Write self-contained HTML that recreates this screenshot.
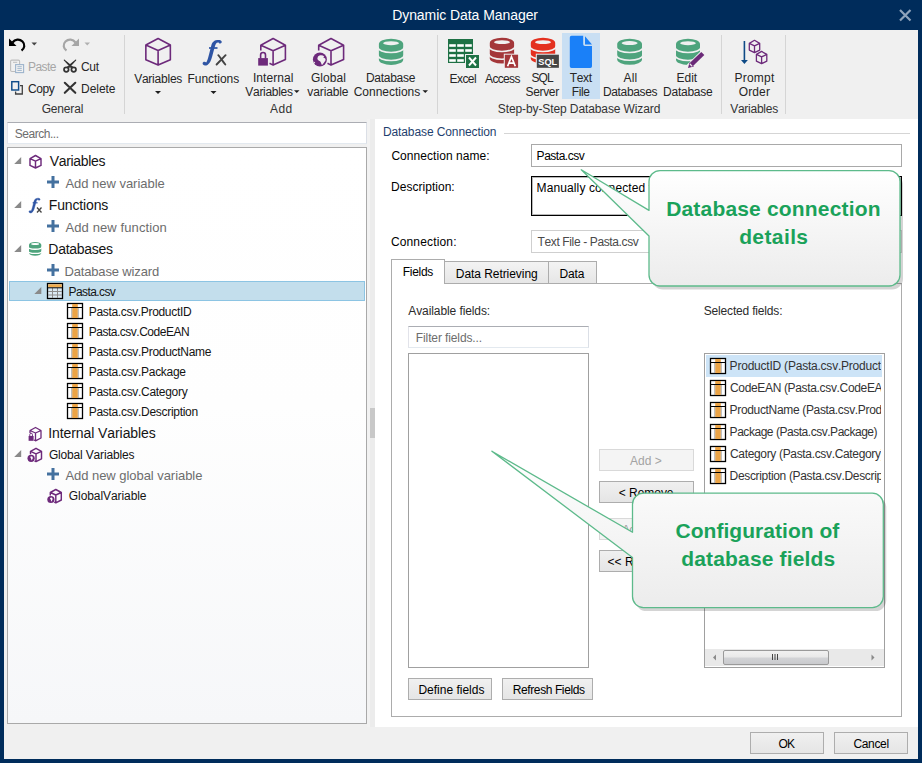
<!DOCTYPE html><html><head><meta charset="utf-8"><style>
html,body{margin:0;padding:0}
body{width:922px;height:763px;position:relative;overflow:hidden;background:#002c5b;font-family:"Liberation Sans",sans-serif;font-kerning:none}
.t{position:absolute;white-space:nowrap;line-height:1}
.r{position:absolute;box-sizing:border-box}
svg{position:absolute;left:0;top:0;overflow:visible}
</style></head><body>
<div class="r" style="left:4px;top:30px;width:914px;height:729px;background:#f0f0f0"></div>
<div class="r" style="left:562px;top:33px;width:38px;height:66px;background:#c9dff3"></div>
<div class="t" style="left:392.15px;top:8.14px;font-size:14px;color:#ffffff;letter-spacing:-0.062px;">Dynamic Data Manager</div>
<div class="r" style="left:124px;top:35px;width:1px;height:79px;background:#d5d5d5"></div>
<div class="r" style="left:437px;top:35px;width:1px;height:79px;background:#d5d5d5"></div>
<div class="r" style="left:721px;top:35px;width:1px;height:79px;background:#d5d5d5"></div>
<div class="r" style="left:785px;top:35px;width:1px;height:79px;background:#d5d5d5"></div>
<div class="t" style="left:41.70px;top:102.84px;font-size:12.0px;color:#333333;letter-spacing:-0.181px;">General</div>
<div class="t" style="left:269.98px;top:102.84px;font-size:12.0px;color:#333333;letter-spacing:0.473px;">Add</div>
<div class="t" style="left:497.86px;top:102.84px;font-size:12.0px;color:#333333;letter-spacing:-0.107px;">Step-by-Step Database Wizard</div>
<div class="t" style="left:730.15px;top:102.84px;font-size:12.0px;color:#333333;letter-spacing:-0.243px;">Variables</div>
<div class="t" style="left:28.02px;top:60.84px;font-size:12.0px;color:#a6a6a6;letter-spacing:-0.542px;">Paste</div>
<div class="t" style="left:80.89px;top:60.84px;font-size:12.0px;color:#262626;letter-spacing:-0.238px;">Cut</div>
<div class="t" style="left:27.89px;top:82.84px;font-size:12.0px;color:#262626;letter-spacing:-0.360px;">Copy</div>
<div class="t" style="left:81.02px;top:82.84px;font-size:12.0px;color:#262626;letter-spacing:-0.034px;">Delete</div>
<div class="t" style="left:134.15px;top:72.84px;font-size:12.0px;color:#262626;letter-spacing:-0.230px;">Variables</div>
<div class="t" style="left:187.52px;top:72.84px;font-size:12.0px;color:#262626;letter-spacing:-0.038px;">Functions</div>
<div class="t" style="left:252.99px;top:71.84px;font-size:12.0px;color:#262626;letter-spacing:0.041px;">Internal</div>
<div class="t" style="left:245.35px;top:85.84px;font-size:12.0px;color:#262626;letter-spacing:-0.305px;">Variables</div>
<div class="t" style="left:311.00px;top:71.84px;font-size:12.0px;color:#262626;letter-spacing:0.024px;">Global</div>
<div class="t" style="left:307.36px;top:85.84px;font-size:12.0px;color:#262626;letter-spacing:-0.121px;">variable</div>
<div class="t" style="left:365.92px;top:71.84px;font-size:12.0px;color:#262626;letter-spacing:-0.265px;">Database</div>
<div class="t" style="left:353.69px;top:85.84px;font-size:12.0px;color:#262626;letter-spacing:-0.017px;">Connections</div>
<div class="t" style="left:449.62px;top:72.84px;font-size:12.0px;color:#262626;letter-spacing:-0.589px;">Excel</div>
<div class="t" style="left:485.08px;top:72.84px;font-size:12.0px;color:#262626;letter-spacing:-0.664px;">Access</div>
<div class="t" style="left:531.46px;top:71.84px;font-size:12.0px;color:#262626;letter-spacing:-0.884px;">SQL</div>
<div class="t" style="left:525.46px;top:85.84px;font-size:12.0px;color:#262626;letter-spacing:-0.320px;">Server</div>
<div class="t" style="left:569.63px;top:71.84px;font-size:12.0px;color:#262626;letter-spacing:-0.327px;">Text</div>
<div class="t" style="left:571.82px;top:85.84px;font-size:12.0px;color:#262626;letter-spacing:-0.406px;">File</div>
<div class="t" style="left:623.58px;top:71.84px;font-size:12.0px;color:#262626;letter-spacing:0.145px;">All</div>
<div class="t" style="left:603.02px;top:85.84px;font-size:12.0px;color:#262626;letter-spacing:-0.369px;">Databases</div>
<div class="t" style="left:676.62px;top:71.84px;font-size:12.0px;color:#262626;letter-spacing:-0.068px;">Edit</div>
<div class="t" style="left:663.02px;top:85.84px;font-size:12.0px;color:#262626;letter-spacing:-0.236px;">Database</div>
<div class="t" style="left:734.52px;top:71.84px;font-size:12.0px;color:#262626;letter-spacing:0.219px;">Prompt</div>
<div class="t" style="left:738.73px;top:85.84px;font-size:12.0px;color:#262626;letter-spacing:0.123px;">Order</div>
<div class="r" style="left:7px;top:122px;width:360px;height:22px;background:#fff;border:1px solid #dfe3e8;border-top-color:#abadb3;border-left-color:#e2e3ea;border-right-color:#dbdfe6;border-bottom-color:#e3e9ef"></div>
<div class="t" style="left:14.76px;top:127.84px;font-size:12px;color:#6d6d6d;letter-spacing:-0.473px;">Search...</div>
<div class="r" style="left:7px;top:147px;width:360px;height:577px;background:linear-gradient(#ffffff 0%,#fefefe 45%,#f6f7f9 100%);border:1px solid #a9a9a9"></div>
<div class="r" style="left:367px;top:119px;width:8px;height:608px;background:#f2f2f2"></div>
<div class="r" style="left:370px;top:119px;width:5px;height:608px;background:#ececec"></div>
<div class="r" style="left:370px;top:408px;width:5px;height:30px;background:#c8c8c8"></div>
<div class="r" style="left:9px;top:281px;width:356px;height:20px;background:#c3deec;border:1px solid #8cc4e3"></div>
<div class="t" style="left:49.84px;top:154.14px;font-size:14px;color:#141414;letter-spacing:-0.350px;">Variables</div>
<div class="t" style="left:65.47px;top:176.99px;font-size:13px;color:#6d6d6d;letter-spacing:-0.028px;">Add new variable</div>
<div class="t" style="left:48.75px;top:198.14px;font-size:14px;color:#141414;letter-spacing:-0.143px;">Functions</div>
<div class="t" style="left:65.47px;top:220.99px;font-size:13px;color:#6d6d6d;letter-spacing:0.109px;">Add new function</div>
<div class="t" style="left:48.35px;top:242.14px;font-size:14px;color:#141414;letter-spacing:-0.285px;">Databases</div>
<div class="t" style="left:64.43px;top:264.99px;font-size:13px;color:#6d6d6d;letter-spacing:-0.152px;">Database wizard</div>
<div class="t" style="left:68.62px;top:285.84px;font-size:12px;color:#141414;letter-spacing:-0.599px;">Pasta.csv</div>
<div class="t" style="left:88.72px;top:305.84px;font-size:12px;color:#141414;letter-spacing:-0.325px;">Pasta.csv.ProductID</div>
<div class="t" style="left:88.72px;top:325.84px;font-size:12px;color:#141414;letter-spacing:-0.491px;">Pasta.csv.CodeEAN</div>
<div class="t" style="left:88.72px;top:345.84px;font-size:12px;color:#141414;letter-spacing:-0.3px">Pasta.csv.ProductName</div>
<div class="t" style="left:88.72px;top:365.84px;font-size:12px;color:#141414;letter-spacing:-0.3px">Pasta.csv.Package</div>
<div class="t" style="left:88.72px;top:385.84px;font-size:12px;color:#141414;letter-spacing:-0.3px">Pasta.csv.Category</div>
<div class="t" style="left:88.72px;top:405.84px;font-size:12px;color:#141414;letter-spacing:-0.3px">Pasta.csv.Description</div>
<div class="t" style="left:48.21px;top:426.14px;font-size:14px;color:#141414;letter-spacing:-0.080px;">Internal Variables</div>
<div class="t" style="left:48.90px;top:448.84px;font-size:12px;color:#141414;letter-spacing:-0.167px;">Global Variables</div>
<div class="t" style="left:65.47px;top:468.99px;font-size:13px;color:#6d6d6d;letter-spacing:-0.05px">Add new global variable</div>
<div class="t" style="left:68.80px;top:490.34px;font-size:12px;color:#141414;letter-spacing:-0.075px;">GlobalVariable</div>
<div class="r" style="left:375px;top:119px;width:543px;height:608px;background:#fff"></div>
<div class="t" style="left:382.92px;top:125.84px;font-size:12px;color:#1f3f6e;letter-spacing:-0.103px;">Database Connection</div>
<div class="r" style="left:504px;top:133px;width:406px;height:1px;background:#d5d5d5"></div>
<div class="t" style="left:391.39px;top:149.84px;font-size:12px;color:#000;letter-spacing:0.061px;">Connection name:</div>
<div class="r" style="left:531px;top:144px;width:371px;height:23px;border:1px solid #a9a9a9;background:#fff"></div>
<div class="t" style="left:536.62px;top:149.84px;font-size:12px;color:#000;letter-spacing:-0.487px;">Pasta.csv</div>
<div class="t" style="left:391.02px;top:180.84px;font-size:12px;color:#000;letter-spacing:0.029px;">Description:</div>
<div class="r" style="left:531px;top:176px;width:371px;height:40px;border:1px solid #000;box-shadow:inset 0 0 0 1px rgba(0,0,0,0.28);background:#fff"></div>
<div class="t" style="left:536.62px;top:181.84px;font-size:12px;color:#000;letter-spacing:0.107px">Manually connected to text file</div>
<div class="t" style="left:390.89px;top:235.84px;font-size:12px;color:#000;letter-spacing:0.156px;">Connection:</div>
<div class="r" style="left:531px;top:230px;width:371px;height:23px;border:1px solid #cfcfcf;background:#fff"></div>
<div class="t" style="left:537.53px;top:235.84px;font-size:12px;color:#4a4a4a;letter-spacing:-0.369px;">Text File - Pasta.csv</div>
<div class="r" style="left:391px;top:283px;width:511px;height:434px;border:1px solid #acacac"></div>
<div class="r" style="left:444px;top:261px;width:105px;height:23px;background:linear-gradient(#f3f3f3,#e6e6e6);border:1px solid #acacac"></div>
<div class="r" style="left:548px;top:261px;width:49px;height:23px;background:linear-gradient(#f3f3f3,#e6e6e6);border:1px solid #acacac"></div>
<div class="r" style="left:391px;top:259px;width:54px;height:25px;background:#fff;border:1px solid #acacac;border-bottom:none"></div>
<div class="t" style="left:402.82px;top:265.84px;font-size:12px;color:#000;letter-spacing:-0.298px;">Fields</div>
<div class="t" style="left:455.82px;top:267.84px;font-size:12px;color:#000;letter-spacing:-0.061px;">Data Retrieving</div>
<div class="t" style="left:559.42px;top:267.84px;font-size:12px;color:#000;letter-spacing:-0.121px;">Data</div>
<div class="t" style="left:408.28px;top:304.84px;font-size:12px;color:#2b2b2b;letter-spacing:-0.091px;">Available fields:</div>
<div class="t" style="left:703.76px;top:304.84px;font-size:12px;color:#2b2b2b;letter-spacing:-0.176px;">Selected fields:</div>
<div class="r" style="left:408px;top:326px;width:181px;height:22px;background:#fff;border:1px solid #dfe3e8;border-top-color:#abadb3;border-left-color:#e2e3ea;border-right-color:#dbdfe6;border-bottom-color:#e3e9ef"></div>
<div class="t" style="left:415.82px;top:331.84px;font-size:12px;color:#6d6d6d;letter-spacing:-0.116px;">Filter fields...</div>
<div class="r" style="left:408px;top:353px;width:181px;height:315px;border:1px solid #a0a0a0;background:#fff"></div>
<div class="r" style="left:599px;top:449px;width:95px;height:22px;border:1px solid #d9d9d9;background:#f4f4f4"></div>
<div class="t" style="left:629.98px;top:454.84px;font-size:12px;color:#a3a3a3;letter-spacing:0.029px;">Add &gt;</div>
<div class="r" style="left:599px;top:481px;width:95px;height:22px;border:1px solid #adadad;background:linear-gradient(#f0f0f0,#e5e5e5)"></div>
<div class="t" style="left:618.81px;top:486.84px;font-size:12px;color:#000;letter-spacing:-0.043px;">&lt; Remove</div>
<div class="r" style="left:599px;top:518px;width:95px;height:22px;border:1px solid #d9d9d9;background:#f4f4f4"></div>
<div class="t" style="left:621.98px;top:523.84px;font-size:12px;color:#a3a3a3;letter-spacing:-0.604px;">Add all &gt;&gt;</div>
<div class="r" style="left:599px;top:550px;width:95px;height:22px;border:1px solid #adadad;background:linear-gradient(#f0f0f0,#e5e5e5)"></div>
<div class="t" style="left:607.41px;top:555.84px;font-size:12px;color:#000;letter-spacing:0.085px;">&lt;&lt; Remove all</div>
<div class="r" style="left:408px;top:678px;width:84px;height:22px;border:1px solid #adadad;background:linear-gradient(#f0f0f0,#e5e5e5)"></div>
<div class="t" style="left:418.42px;top:683.84px;font-size:12px;color:#000;">Define fields</div>
<div class="r" style="left:502px;top:678px;width:91px;height:22px;border:1px solid #adadad;background:linear-gradient(#f0f0f0,#e5e5e5)"></div>
<div class="t" style="left:512.82px;top:683.84px;font-size:12px;color:#000;letter-spacing:-0.403px;">Refresh Fields</div>
<div class="r" style="left:704px;top:353px;width:181px;height:315px;border:1px solid #a0a0a0;background:#fff"></div>
<div class="r" style="left:706px;top:355px;width:176px;height:22px;background:#cde4f7"></div>
<div class="r" style="left:706px;top:357px;width:175.3px;height:18px;overflow:hidden"><div class="t" style="left:23.62px;top:2.84px;font-size:12px;color:#333333;letter-spacing:-0.219px">ProductID (Pasta.csv.ProductID)</div>
</div><div class="r" style="left:706px;top:379px;width:175.3px;height:18px;overflow:hidden"><div class="t" style="left:23.99px;top:2.84px;font-size:12px;color:#333333;letter-spacing:-0.34px">CodeEAN (Pasta.csv.CodeEAN)</div>
</div><div class="r" style="left:706px;top:401px;width:175.3px;height:18px;overflow:hidden"><div class="t" style="left:23.62px;top:2.84px;font-size:12px;color:#333333;letter-spacing:-0.34px">ProductName (Pasta.csv.ProductName)</div>
</div><div class="r" style="left:706px;top:423px;width:175.3px;height:18px;overflow:hidden"><div class="t" style="left:23.62px;top:2.84px;font-size:12px;color:#333333;letter-spacing:-0.467px">Package (Pasta.csv.Package)</div>
</div><div class="r" style="left:706px;top:445px;width:175.3px;height:18px;overflow:hidden"><div class="t" style="left:23.99px;top:2.84px;font-size:12px;color:#333333;letter-spacing:-0.335px">Category (Pasta.csv.Category)</div>
</div><div class="r" style="left:706px;top:467px;width:175.3px;height:18px;overflow:hidden"><div class="t" style="left:23.62px;top:2.84px;font-size:12px;color:#333333;letter-spacing:-0.34px">Description (Pasta.csv.Description)</div>
</div><div class="r" style="left:705px;top:649px;width:179px;height:17px;background:#e9e9e9"></div>
<div class="r" style="left:723px;top:650px;width:106px;height:15px;border:1px solid #9a9a9a;border-radius:2px;background:linear-gradient(#f1f1f1 0%,#e9e9e9 45%,#d2d3d6 55%,#c9cacd 100%)"></div>
<div class="r" style="left:750px;top:732px;width:74px;height:22px;border:1px solid #adadad;background:linear-gradient(#f0f0f0,#e5e5e5)"></div>
<div class="t" style="left:778.43px;top:737.84px;font-size:12px;color:#000;letter-spacing:-0.835px;">OK</div>
<div class="r" style="left:834px;top:732px;width:74px;height:22px;border:1px solid #adadad;background:linear-gradient(#f0f0f0,#e5e5e5)"></div>
<div class="t" style="left:853.39px;top:737.84px;font-size:12px;color:#000;letter-spacing:-0.328px;">Cancel</div>
<svg width="922" height="763" viewBox="0 0 922 763">
<path d="M900,10 L910.5,20.5 M910.5,10 L900,20.5" stroke="#8fa3bb" stroke-width="2.2"/>
<path d="M12.5,42.5 C15,39 19.5,38.5 22.5,41.5 C25.5,44.5 24.5,48.5 21.5,50.5" fill="none" stroke="#000" stroke-width="2.2"/>
<path d="M9,38.5 V46 H16.5 Z" fill="#000"/>
<path d="M31.5,42.5 H37 L34.25,45.5 Z" fill="#444"/>
<path d="M75.5,42.5 C73,39 68.5,38.5 65.5,41.5 C62.5,44.5 63.5,48.5 66.5,50.5" fill="none" stroke="#a6a6a6" stroke-width="2.2"/>
<path d="M79,38.5 V46 H71.5 Z" fill="#a6a6a6"/>
<path d="M84.5,42.5 H90 L87.25,45.5 Z" fill="#b0b0b0"/>
<rect x="10.6" y="60.1" width="9" height="11.4" rx="1.2" fill="none" stroke="#bdbdbd" stroke-width="1.1"/><path d="M13,62.3 H17.2" stroke="#bdbdbd" stroke-width="1"/>
<rect x="15.6" y="64.6" width="8" height="8" fill="#f0f0f0" stroke="#9db4cc" stroke-width="1.1"/>
<path d="M17.4,66.7 H21.8 M17.4,68.6 H21.8 M17.4,70.5 H21.8" stroke="#9db4cc" stroke-width="0.9"/>
<circle cx="66.3" cy="69.6" r="2.3" fill="none" stroke="#333" stroke-width="1.7"/><circle cx="73.7" cy="69.6" r="2.3" fill="none" stroke="#333" stroke-width="1.7"/>
<path d="M64.3,60.2 L71,67.5 L72.3,66.6 Z M75.7,60.2 L69,67.5 L67.7,66.6 Z" fill="#333" stroke="#333" stroke-width="1.1" stroke-linejoin="round"/>
<rect x="11.8" y="81.7" width="6.8" height="8.3" fill="none" stroke="#0f4c8a" stroke-width="1.45"/>
<path d="M20,85.6 H22.3 V94 H15.6 V91.6" fill="none" stroke="#404040" stroke-width="1.3"/>
<path d="M64.8,82.8 L75.3,92.8 M75.3,82.8 L64.8,92.8" stroke="#333" stroke-width="2.1" stroke-linecap="round"/>
<path d="M158.1,38.5 L170.35,45.017 L158.1,50.47 L145.85,45.017 Z M158.1,50.47 V65.1 M145.85,45.017 V59.647000000000006 L158.1,65.1 L170.35,59.647000000000006 V45.017" fill="none" stroke="#6d2a7b" stroke-width="1.6" stroke-linejoin="round" />
<path d="M155,91 H161 L158,94 Z" fill="#1e1e1e"/>
<path d="M202.6,63.3 C202.6,61.6 205.2,61.2 206.2,62.6 C207.2,61 208,58.5 209,54.5 L211.3,45.5 C212.6,40.8 215.5,39.8 219.5,40.1 C222.2,40.4 222.6,43.3 220.3,43.6 C219.3,43.7 218.8,43 218.6,42.5 C216.3,42.2 215.5,44 214.7,47 L212.3,56 C210.8,62 208.5,65.7 205,65.6 C203.6,65.5 202.6,64.6 202.6,63.3 Z" fill="#2f55a4"/>
<path d="M209,48 H217.5" stroke="#2f55a4" stroke-width="1.7"/>
<path d="M218.3,55.2 C220,57 222.5,61 225.3,64.5 M225.6,55.2 L216.6,64.5" stroke="#444" stroke-width="1.9" stroke-linecap="round"/>
<path d="M210.5,91 H216.5 L213.5,94 Z" fill="#1e1e1e"/>
<path d="M273.1,38.5 L285.4,45.3 L273.1,50.75 L260.8,45.3 Z M273.1,50.75 V65.1 M260.8,45.3 V50.5 M269.5,63.3 L273.1,65.1 L285.4,59.5 V45.3" fill="none" stroke="#6d2a7b" stroke-width="1.6" stroke-linejoin="round"/>
<rect x="258.2" y="58.1" width="9.7" height="7.5" fill="#6d2a7b"/><path d="M260.6,58.5 V55 A2.45,2.45 0 0 1 265.5,55 V58.5" fill="none" stroke="#6d2a7b" stroke-width="1.6"/>
<path d="M294,90.2 H299.5 L296.75,93 Z" fill="#1e1e1e"/>
<path d="M331,38.5 L343.6,45.3 L331,50.75 L318.7,45.3 Z M331,50.75 V65.1 M318.7,45.3 V50.5 M327.5,63.3 L331,65.1 L343.6,59.5 V45.3" fill="none" stroke="#6d2a7b" stroke-width="1.6" stroke-linejoin="round"/>
<circle cx="319.9" cy="59.5" r="7" fill="#6d2a7b"/><path d="M318,56.6 C319.5,55 322.5,54.8 324.2,56.4 L323.2,57.6 C325.2,57.8 326.2,59.5 325.2,61 C324.2,62.5 322.8,64 322,65.2 C321.2,63.5 321,62.2 320,61.2 C318.6,60.6 317.2,59.5 317.4,58.2 Z M313.4,61.6 L315.2,62.2 L314.6,63.6 Z" fill="#f0f0f0"/>
<path d="M378.9,43.940000000000005 A12.150000000000006,5.240000000000001 0 0 1 403.2,43.940000000000005 V59.660000000000004 A12.150000000000006,5.240000000000001 0 0 1 378.9,59.660000000000004 Z" fill="#4ea47d"/><ellipse cx="391.04999999999995" cy="43.14000000000001" rx="7.897500000000004" ry="1.9912000000000005" fill="#f0f0f0"/><path d="M377.9,47.346000000000004 A13.150000000000006,5.240000000000001 0 0 0 404.2,47.346000000000004" fill="none" stroke="#f0f0f0" stroke-width="1.57"/><path d="M377.9,55.206 A13.150000000000006,5.240000000000001 0 0 0 404.2,55.206" fill="none" stroke="#f0f0f0" stroke-width="1.57"/>
<path d="M422.5,90.2 H428 L425.25,93 Z" fill="#1e1e1e"/>
<rect x="448" y="39" width="25" height="24" fill="#1e7145"/>
<rect x="449.2" y="44.2" width="6.6" height="2.6" fill="#fff"/>
<rect x="449.2" y="49.2" width="6.6" height="2.6" fill="#fff"/>
<rect x="449.2" y="54.2" width="6.6" height="2.6" fill="#fff"/>
<rect x="449.2" y="59.2" width="6.6" height="2.6" fill="#fff"/>
<rect x="457.2" y="44.2" width="6.6" height="2.6" fill="#fff"/>
<rect x="457.2" y="49.2" width="6.6" height="2.6" fill="#fff"/>
<rect x="457.2" y="54.2" width="6.6" height="2.6" fill="#fff"/>
<rect x="457.2" y="59.2" width="6.6" height="2.6" fill="#fff"/>
<rect x="465.2" y="44.2" width="6.6" height="2.6" fill="#fff"/>
<rect x="465.2" y="49.2" width="6.6" height="2.6" fill="#fff"/>
<rect x="465" y="54" width="15" height="15" fill="#f0f0f0"/><rect x="466" y="55" width="13" height="13" fill="#1e7145"/>
<path d="M469,57.5 L476,65.5 M476,57.5 L469,65.5" stroke="#fff" stroke-width="1.9"/>
<path d="M489.8,42.96 A12.150000000000006,5.160000000000001 0 0 1 514.1,42.96 V58.44 A12.150000000000006,5.160000000000001 0 0 1 489.8,58.44 Z" fill="#a4373a"/><ellipse cx="501.95000000000005" cy="42.160000000000004" rx="7.897500000000004" ry="1.9608000000000003" fill="#f0f0f0"/><path d="M488.8,46.314 A13.150000000000006,5.160000000000001 0 0 0 515.1,46.314" fill="none" stroke="#f0f0f0" stroke-width="1.55"/><path d="M488.8,54.054 A13.150000000000006,5.160000000000001 0 0 0 515.1,54.054" fill="none" stroke="#f0f0f0" stroke-width="1.55"/>
<rect x="503.8" y="53.7" width="15.3" height="15.1" fill="#f0f0f0"/><rect x="504.8" y="54.7" width="13.3" height="13.1" fill="#a4373a"/>
<path d="M507.6,66.2 L511.45,56.8 L515.3,66.2 M508.9,63.2 H514" fill="none" stroke="#fff" stroke-width="1.7"/>
<path d="M530.8,42.96 A12.200000000000045,5.160000000000001 0 0 1 555.2,42.96 V58.44 A12.200000000000045,5.160000000000001 0 0 1 530.8,58.44 Z" fill="#e4301f"/><ellipse cx="543.0" cy="42.160000000000004" rx="7.93000000000003" ry="1.9608000000000003" fill="#f0f0f0"/><path d="M529.8,46.314 A13.200000000000045,5.160000000000001 0 0 0 556.2,46.314" fill="none" stroke="#f0f0f0" stroke-width="1.55"/><path d="M529.8,54.054 A13.200000000000045,5.160000000000001 0 0 0 556.2,54.054" fill="none" stroke="#f0f0f0" stroke-width="1.55"/>
<rect x="535.8" y="53.7" width="24.1" height="15.1" fill="#f0f0f0"/><rect x="536.8" y="54.7" width="22.1" height="13.1" fill="#454545"/>
<text x="547.8" y="65.3" font-family="Liberation Sans" font-weight="bold" font-size="9.2" fill="#fff" text-anchor="middle">SQL</text>
<path d="M571.5,35.8 H583.2 V44.2 A1.8,1.8 0 0 0 585,46 H592 V66.3 A1.7,1.7 0 0 1 590.3,68 H571.5 A1.7,1.7 0 0 1 569.8,66.3 V37.5 A1.7,1.7 0 0 1 571.5,35.8 Z" fill="#1a80f8"/>
<path d="M585,36.3 L592,44.4 H585 Z" fill="#1a80f8"/>
<path d="M617.2,43.900000000000006 A12.399999999999977,5.2 0 0 1 642,43.900000000000006 V59.5 A12.399999999999977,5.2 0 0 1 617.2,59.5 Z" fill="#4ea47d"/><ellipse cx="629.6" cy="43.10000000000001" rx="8.059999999999986" ry="1.9760000000000002" fill="#f0f0f0"/><path d="M616.2,47.28 A13.399999999999977,5.2 0 0 0 643,47.28" fill="none" stroke="#f0f0f0" stroke-width="1.56"/><path d="M616.2,55.08 A13.399999999999977,5.2 0 0 0 643,55.08" fill="none" stroke="#f0f0f0" stroke-width="1.56"/>
<path d="M676,43.940000000000005 A12.0,5.240000000000001 0 0 1 700,43.940000000000005 V59.660000000000004 A12.0,5.240000000000001 0 0 1 676,59.660000000000004 Z" fill="#4ea47d"/><ellipse cx="688.0" cy="43.14000000000001" rx="7.800000000000001" ry="1.9912000000000005" fill="#f0f0f0"/><path d="M675,47.346000000000004 A13.0,5.240000000000001 0 0 0 701,47.346000000000004" fill="none" stroke="#f0f0f0" stroke-width="1.57"/><path d="M675,55.206 A13.0,5.240000000000001 0 0 0 701,55.206" fill="none" stroke="#f0f0f0" stroke-width="1.57"/>
<path d="M687.5,70 L704,53.8" stroke="#f0f0f0" stroke-width="8.3"/>
<path d="M691.5,64.3 L702.8,53.5" stroke="#6b2a78" stroke-width="4.4" stroke-linecap="butt"/>
<path d="M688,68 L689.6,62.2 L694,66.5 Z" fill="#6b2a78"/><path d="M689.9,64 L692.2,66.3" stroke="#f0f0f0" stroke-width="1.1"/>
<path d="M744.4,41 V61" stroke="#0e4a86" stroke-width="1.6"/><path d="M741,60 H747.9 L744.4,64 Z" fill="#0e4a86"/>
<path d="M754.5,40.3 L759.7,43.3135 L754.5,45.834999999999994 L749.3,43.3135 Z M754.5,45.834999999999994 V52.599999999999994 M749.3,43.3135 V50.0785 L754.5,52.599999999999994 L759.7,50.0785 V43.3135" fill="none" stroke="#6d2a7b" stroke-width="1.3" stroke-linejoin="round" />
<path d="M761.6,51.4 L766.8000000000001,54.4135 L761.6,56.935 L756.4,54.4135 Z M761.6,56.935 V63.7 M756.4,54.4135 V61.1785 L761.6,63.7 L766.8000000000001,61.1785 V54.4135" fill="none" stroke="#6d2a7b" stroke-width="1.3" stroke-linejoin="round" />
</svg><svg width="922" height="763" viewBox="0 0 922 763">
<path d="M14.2,164 H21.2 V157 Z" fill="#8a8a8a"/>
<path d="M14.2,208 H21.2 V201 Z" fill="#8a8a8a"/>
<path d="M14.2,252 H21.2 V245 Z" fill="#8a8a8a"/>
<path d="M34.3,294 H41.3 V287 Z" fill="#8a8a8a"/>
<path d="M14.2,457 H21.2 V450 Z" fill="#8a8a8a"/>
<path d="M35.5,155.5 L41.0,158.5625 L35.5,161.125 L30.0,158.5625 Z M35.5,161.125 V168.0 M30.0,158.5625 V165.4375 L35.5,168.0 L41.0,165.4375 V158.5625" fill="none" stroke="#6d2a7b" stroke-width="1.45" stroke-linejoin="round" />
<g transform="translate(-87.5,175.2) scale(0.575)"><path d="M202.6,63.3 C202.6,61.6 205.2,61.2 206.2,62.6 C207.2,61 208,58.5 209,54.5 L211.3,45.5 C212.6,40.8 215.5,39.8 219.5,40.1 C222.2,40.4 222.6,43.3 220.3,43.6 C219.3,43.7 218.8,43 218.6,42.5 C216.3,42.2 215.5,44 214.7,47 L212.3,56 C210.8,62 208.5,65.7 205,65.6 C203.6,65.5 202.6,64.6 202.6,63.3 Z" fill="#2f55a4" stroke="#2f55a4" stroke-width="0.8"/><path d="M209,48 H217.5" stroke="#2f55a4" stroke-width="2"/></g>
<path d="M37,207.5 L41.5,212.5 M41.5,207.5 L37,212.5" stroke="#444" stroke-width="1.3"/>
<path d="M29,244.74 A6.149999999999999,2.739999999999998 0 0 1 41.3,244.74 V252.95999999999998 A6.149999999999999,2.739999999999998 0 0 1 29,252.95999999999998 Z" fill="#4ea47d"/><ellipse cx="35.15" cy="243.94" rx="3.997499999999999" ry="1.0411999999999992" fill="#ffffff"/><path d="M28,246.521 A7.149999999999999,2.739999999999998 0 0 0 42.3,246.521" fill="none" stroke="#ffffff" stroke-width="1.40"/><path d="M28,250.631 A7.149999999999999,2.739999999999998 0 0 0 42.3,250.631" fill="none" stroke="#ffffff" stroke-width="1.40"/>
<path d="M47,182 H59 M53,176 V188" stroke="#44719f" stroke-width="3"/>
<path d="M47,226 H59 M53,220 V232" stroke="#44719f" stroke-width="3"/>
<path d="M47,270 H59 M53,264 V276" stroke="#44719f" stroke-width="3"/>
<path d="M47,474 H59 M53,468 V480" stroke="#44719f" stroke-width="3"/>
<rect x="47.5" y="283.5" width="15" height="15" fill="#dbeaf4" stroke="#000" stroke-width="1.3"/>
<rect x="48.3" y="284.3" width="13.4" height="3" fill="#f0ad4e"/>
<path d="M48,291.5 H62 M48,295 H62 M52.5,288 V298 M57.5,288 V298" stroke="#8d8d8d" stroke-width="1"/>
<path d="M48,287.8 H62" stroke="#000" stroke-width="1"/>
<rect x="67.5" y="303.5" width="15" height="15" fill="#fff" stroke="#000" stroke-width="1.3"/><rect x="72.2" y="304" width="5.6" height="14" fill="#eba447"/><path d="M71.7,308 V318 M78.3,308 V318" stroke="#9a9a9a" stroke-width="0.8"/><path d="M68,307.5 H82" stroke="#000" stroke-width="1"/>
<rect x="67.5" y="323.5" width="15" height="15" fill="#fff" stroke="#000" stroke-width="1.3"/><rect x="72.2" y="324" width="5.6" height="14" fill="#eba447"/><path d="M71.7,328 V338 M78.3,328 V338" stroke="#9a9a9a" stroke-width="0.8"/><path d="M68,327.5 H82" stroke="#000" stroke-width="1"/>
<rect x="67.5" y="343.5" width="15" height="15" fill="#fff" stroke="#000" stroke-width="1.3"/><rect x="72.2" y="344" width="5.6" height="14" fill="#eba447"/><path d="M71.7,348 V358 M78.3,348 V358" stroke="#9a9a9a" stroke-width="0.8"/><path d="M68,347.5 H82" stroke="#000" stroke-width="1"/>
<rect x="67.5" y="363.5" width="15" height="15" fill="#fff" stroke="#000" stroke-width="1.3"/><rect x="72.2" y="364" width="5.6" height="14" fill="#eba447"/><path d="M71.7,368 V378 M78.3,368 V378" stroke="#9a9a9a" stroke-width="0.8"/><path d="M68,367.5 H82" stroke="#000" stroke-width="1"/>
<rect x="67.5" y="383.5" width="15" height="15" fill="#fff" stroke="#000" stroke-width="1.3"/><rect x="72.2" y="384" width="5.6" height="14" fill="#eba447"/><path d="M71.7,388 V398 M78.3,388 V398" stroke="#9a9a9a" stroke-width="0.8"/><path d="M68,387.5 H82" stroke="#000" stroke-width="1"/>
<rect x="67.5" y="403.5" width="15" height="15" fill="#fff" stroke="#000" stroke-width="1.3"/><rect x="72.2" y="404" width="5.6" height="14" fill="#eba447"/><path d="M71.7,408 V418 M78.3,408 V418" stroke="#9a9a9a" stroke-width="0.8"/><path d="M68,407.5 H82" stroke="#000" stroke-width="1"/>
<rect x="710.5" y="358.5" width="15" height="15" fill="#fff" stroke="#000" stroke-width="1.3"/><rect x="715.2" y="359" width="5.6" height="14" fill="#eba447"/><path d="M714.7,363 V373 M721.3,363 V373" stroke="#9a9a9a" stroke-width="0.8"/><path d="M711,362.5 H725" stroke="#000" stroke-width="1"/>
<rect x="710.5" y="380.5" width="15" height="15" fill="#fff" stroke="#000" stroke-width="1.3"/><rect x="715.2" y="381" width="5.6" height="14" fill="#eba447"/><path d="M714.7,385 V395 M721.3,385 V395" stroke="#9a9a9a" stroke-width="0.8"/><path d="M711,384.5 H725" stroke="#000" stroke-width="1"/>
<rect x="710.5" y="402.5" width="15" height="15" fill="#fff" stroke="#000" stroke-width="1.3"/><rect x="715.2" y="403" width="5.6" height="14" fill="#eba447"/><path d="M714.7,407 V417 M721.3,407 V417" stroke="#9a9a9a" stroke-width="0.8"/><path d="M711,406.5 H725" stroke="#000" stroke-width="1"/>
<rect x="710.5" y="424.5" width="15" height="15" fill="#fff" stroke="#000" stroke-width="1.3"/><rect x="715.2" y="425" width="5.6" height="14" fill="#eba447"/><path d="M714.7,429 V439 M721.3,429 V439" stroke="#9a9a9a" stroke-width="0.8"/><path d="M711,428.5 H725" stroke="#000" stroke-width="1"/>
<rect x="710.5" y="446.5" width="15" height="15" fill="#fff" stroke="#000" stroke-width="1.3"/><rect x="715.2" y="447" width="5.6" height="14" fill="#eba447"/><path d="M714.7,451 V461 M721.3,451 V461" stroke="#9a9a9a" stroke-width="0.8"/><path d="M711,450.5 H725" stroke="#000" stroke-width="1"/>
<rect x="710.5" y="468.5" width="15" height="15" fill="#fff" stroke="#000" stroke-width="1.3"/><rect x="715.2" y="469" width="5.6" height="14" fill="#eba447"/><path d="M714.7,473 V483 M721.3,473 V483" stroke="#9a9a9a" stroke-width="0.8"/><path d="M711,472.5 H725" stroke="#000" stroke-width="1"/>
<path d="M35.5,427.5 L41,430.5 L35.5,433 L30,430.5 Z M35.5,433 V440.5 M30,430.5 V433 M34,440 L35.5,440.8 L41,438 V430.5" fill="none" stroke="#6d2a7b" stroke-width="1.3" stroke-linejoin="round"/>
<rect x="28.6" y="436" width="5" height="4.8" fill="#6d2a7b"/><path d="M29.8,436.5 V434.5 A1.3,1.3 0 0 1 32.4,434.5 V436.5" fill="none" stroke="#6d2a7b" stroke-width="1"/>
<path d="M36.0,448.3 L41.5,451.3 L36.0,453.8 L30.5,451.3 Z M36.0,453.8 V461.3 M30.5,451.3 V454.3 M34.5,460.8 L36.0,461.6 L41.5,458.8 V451.3" fill="none" stroke="#6d2a7b" stroke-width="1.45" stroke-linejoin="round"/><circle cx="31.1" cy="458.3" r="3.6" fill="#6d2a7b"/><path d="M30.1,456.7 L32.1,456.3 L32.9,457.90000000000003 L31.7,460.5 L31.1,458.7 Z" fill="#fff"/>
<path d="M55.8,489.5 L61.3,492.5 L55.8,495.0 L50.3,492.5 Z M55.8,495.0 V502.5 M50.3,492.5 V495.5 M54.3,502.0 L55.8,502.8 L61.3,500.0 V492.5" fill="none" stroke="#6d2a7b" stroke-width="1.45" stroke-linejoin="round"/><circle cx="50.9" cy="499.5" r="3.6" fill="#6d2a7b"/><path d="M49.9,497.9 L51.9,497.5 L52.699999999999996,499.1 L51.5,501.7 L50.9,499.9 Z" fill="#fff"/>
<path d="M716,654.5 V660.5 L713,657.5 Z" fill="#8a8a8a"/><path d="M871.5,654.5 V660.5 L874.5,657.5 Z" fill="#8a8a8a"/>
<path d="M772.5,654 V660 M775,654 V660 M777.5,654 V660" stroke="#444" stroke-width="1"/>
</svg><svg width="922" height="763" viewBox="0 0 922 763">
<defs><linearGradient id="c1" x1="0" y1="0" x2="0" y2="1"><stop offset="0" stop-color="#ffffff"/><stop offset="1" stop-color="#ececec"/></linearGradient><filter id="fc1" x="-10%" y="-10%" width="120%" height="130%"><feGaussianBlur stdDeviation="0.4"/></filter></defs><path d="M663,174.1 H892 A11,11 0 0 1 903,185.1 V278.5 A11,11 0 0 1 892,289.5 H663 A11,11 0 0 1 652,278.5 Z" fill="#000" fill-opacity="0.17" filter="url(#fc1)"/><path d="M660,170.6 H889 A11,11 0 0 1 900,181.6 V275 A11,11 0 0 1 889,286 H660 A11,11 0 0 1 649,275 V236 L581.3,169.8 L649,210.4 V181.6 A11,11 0 0 1 660,170.6 Z" fill="url(#c1)" stroke="#5dba8b" stroke-width="1.3" stroke-linejoin="round"/>
<defs><linearGradient id="c2" x1="0" y1="0" x2="0" y2="1"><stop offset="0" stop-color="#ffffff"/><stop offset="1" stop-color="#ececec"/></linearGradient><filter id="fc2" x="-10%" y="-10%" width="120%" height="130%"><feGaussianBlur stdDeviation="0.4"/></filter></defs><path d="M646.5,496.7 H875.3 A11,11 0 0 1 886.3,507.7 V600.1 A11,11 0 0 1 875.3,611.1 H646.5 A11,11 0 0 1 635.5,600.1 Z" fill="#000" fill-opacity="0.17" filter="url(#fc2)"/><path d="M643.5,493.2 H872.3 A11,11 0 0 1 883.3,504.2 V596.6 A11,11 0 0 1 872.3,607.6 H643.5 A11,11 0 0 1 632.5,596.6 V557.5 L491.9,451.2 L632.5,532.3 V504.2 A11,11 0 0 1 643.5,493.2 Z" fill="url(#c2)" stroke="#5dba8b" stroke-width="1.3" stroke-linejoin="round"/>
</svg><div class="t" style="left:666.20px;top:197.82px;font-size:21px;color:#1aa25a;font-weight:bold;letter-spacing:0.171px;">Database connection</div>
<div class="t" style="left:739.14px;top:225.82px;font-size:21px;color:#1aa25a;font-weight:bold;letter-spacing:0.399px;">details</div>
<div class="t" style="left:675.44px;top:519.92px;font-size:21px;color:#1aa25a;font-weight:bold;letter-spacing:0.042px;">Configuration of</div>
<div class="t" style="left:681.24px;top:547.72px;font-size:21px;color:#1aa25a;font-weight:bold;letter-spacing:0.164px;">database fields</div>
</body></html>
